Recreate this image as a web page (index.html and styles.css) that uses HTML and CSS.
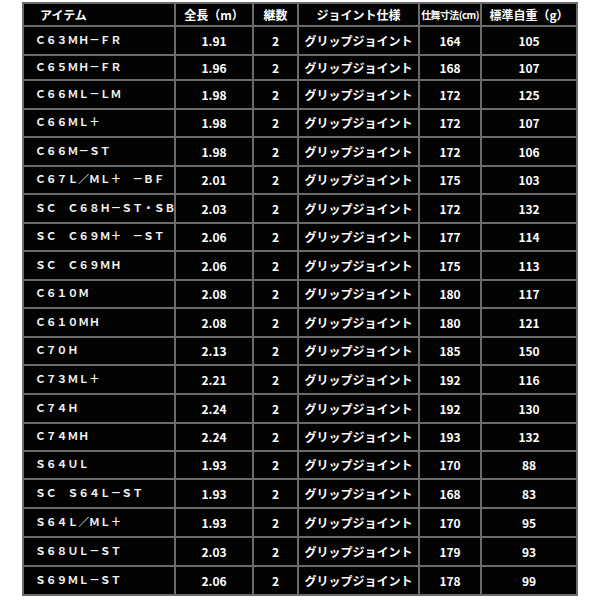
FILE: index.html
```html
<!DOCTYPE html>
<html lang="ja">
<head>
<meta charset="utf-8">
<link rel="stylesheet" href="styles.css">
</head>
<body>
<table class="spec">
<colgroup>
<col class="c-item"><col class="c-len"><col class="c-pc"><col class="c-joint"><col class="c-close"><col class="c-wt">
</colgroup>
<thead>
<tr class="r-head"><th class="item">アイテム</th><th>全長（m）</th><th>継数</th><th>ジョイント仕様</th><th class="small">仕舞寸法(cm)</th><th>標準自重（g）</th></tr>
</thead>
<tbody>
<tr class="r1"><td class="item">Ｃ６３ＭＨ－ＦＲ</td><td>1.91</td><td>2</td><td>グリップジョイント</td><td>164</td><td>105</td></tr>
<tr class="r2"><td class="item">Ｃ６５ＭＨ－ＦＲ</td><td>1.96</td><td>2</td><td>グリップジョイント</td><td>168</td><td>107</td></tr>
<tr class="ra"><td class="item">Ｃ６６ＭＬ－ＬＭ</td><td>1.98</td><td>2</td><td>グリップジョイント</td><td>172</td><td>125</td></tr>
<tr class="rb"><td class="item">Ｃ６６ＭＬ＋</td><td>1.98</td><td>2</td><td>グリップジョイント</td><td>172</td><td>107</td></tr>
<tr class="ra"><td class="item">Ｃ６６Ｍ－ＳＴ</td><td>1.98</td><td>2</td><td>グリップジョイント</td><td>172</td><td>106</td></tr>
<tr class="rb"><td class="item">Ｃ６７Ｌ／ＭＬ＋　－ＢＦ</td><td>2.01</td><td>2</td><td>グリップジョイント</td><td>175</td><td>103</td></tr>
<tr class="ra"><td class="item">ＳＣ　Ｃ６８Ｈ－ＳＴ・ＳＢ</td><td>2.03</td><td>2</td><td>グリップジョイント</td><td>172</td><td>132</td></tr>
<tr class="rb"><td class="item">ＳＣ　Ｃ６９Ｍ＋　－ＳＴ</td><td>2.06</td><td>2</td><td>グリップジョイント</td><td>177</td><td>114</td></tr>
<tr class="ra"><td class="item">ＳＣ　Ｃ６９ＭＨ</td><td>2.06</td><td>2</td><td>グリップジョイント</td><td>175</td><td>113</td></tr>
<tr class="rb"><td class="item">Ｃ６１０Ｍ</td><td>2.08</td><td>2</td><td>グリップジョイント</td><td>180</td><td>117</td></tr>
<tr class="ra"><td class="item">Ｃ６１０ＭＨ</td><td>2.08</td><td>2</td><td>グリップジョイント</td><td>180</td><td>121</td></tr>
<tr class="rb"><td class="item">Ｃ７０Ｈ</td><td>2.13</td><td>2</td><td>グリップジョイント</td><td>185</td><td>150</td></tr>
<tr class="ra"><td class="item">Ｃ７３ＭＬ＋</td><td>2.21</td><td>2</td><td>グリップジョイント</td><td>192</td><td>116</td></tr>
<tr class="ra"><td class="item">Ｃ７４Ｈ</td><td>2.24</td><td>2</td><td>グリップジョイント</td><td>192</td><td>130</td></tr>
<tr class="rb"><td class="item">Ｃ７４ＭＨ</td><td>2.24</td><td>2</td><td>グリップジョイント</td><td>193</td><td>132</td></tr>
<tr class="rb"><td class="item">Ｓ６４ＵＬ</td><td>1.93</td><td>2</td><td>グリップジョイント</td><td>170</td><td>88</td></tr>
<tr class="ra"><td class="item">ＳＣ　Ｓ６４Ｌ－ＳＴ</td><td>1.93</td><td>2</td><td>グリップジョイント</td><td>168</td><td>83</td></tr>
<tr class="ra"><td class="item">Ｓ６４Ｌ／ＭＬ＋</td><td>1.93</td><td>2</td><td>グリップジョイント</td><td>170</td><td>95</td></tr>
<tr class="ra"><td class="item">Ｓ６８ＵＬ－ＳＴ</td><td>2.03</td><td>2</td><td>グリップジョイント</td><td>179</td><td>93</td></tr>
<tr class="ra"><td class="item">Ｓ６９ＭＬ－ＳＴ</td><td>2.06</td><td>2</td><td>グリップジョイント</td><td>178</td><td>99</td></tr>
</tbody>
</table>
</body>
</html>
```

FILE: styles.css
```css
html, body {
  margin: 0;
  padding: 0;
  background: #ffffff;
}
body {
  font-family: "Noto Sans CJK JP", "Noto Sans", sans-serif;
  color: #ffffff;
}
.spec {
  margin: 2px 0 0 22px;
  width: 556px;
  table-layout: fixed;
  border-collapse: separate;
  border-spacing: 2px;
  background: #6b6b6b;
}
.c-item { width: 150px; }
.c-len { width: 76px; }
.c-pc { width: 43px; }
.c-joint { width: 119px; }
.c-close { width: 60px; }
.c-wt { width: 94px; }

.spec th, .spec td {
  background: #030303;
  padding: 0;
  text-align: center;
  vertical-align: middle;
  font-weight: bold;
  font-size: 12px;
  line-height: 14px;
  white-space: nowrap;
  overflow: hidden;
}
.spec th.item {
  text-align: left;
  padding-left: 16px;
}
.spec th.small {
  font-size: 10px;
  letter-spacing: -0.6px;
}
.spec td.item {
  text-align: left;
  padding-left: 11px;
  font-family: "DejaVu Sans", "Noto Sans CJK JP", sans-serif;
  font-size: 10.8px;
  letter-spacing: 0;
  color: #f4f4f4;
}
.r-head th { height: 21px; }
.r1 td { height: 27px; }
.r2 td { height: 23px; }
.ra td { height: 27px; }
.rb td { height: 26px; }
```
